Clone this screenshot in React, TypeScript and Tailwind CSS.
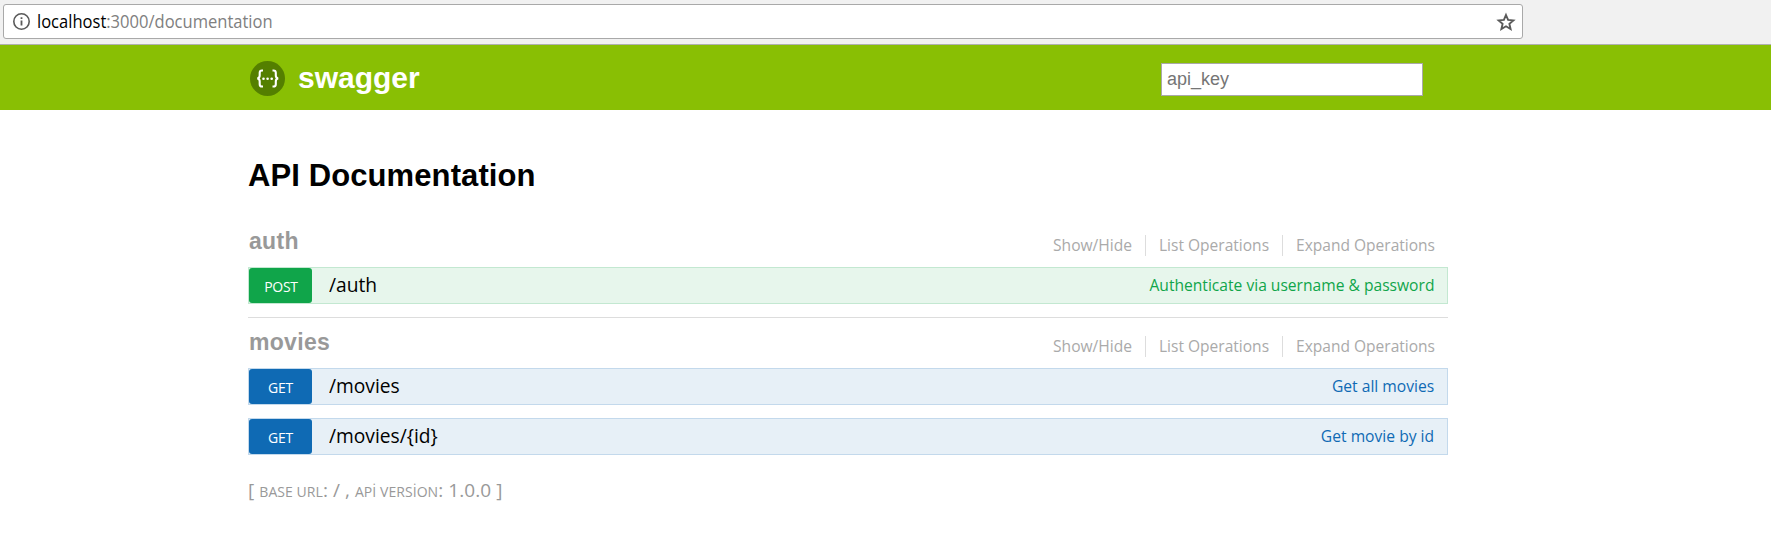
import React from "react";

interface Operation {
  method: "POST" | "GET";
  path: string;
  summary: string;
}

function ResourceHeading({ name }: { name: string }) {
  return (
    <div className="flex h-[37px] items-start justify-between">
      <h2 className="-mt-[3px] pl-px font-['Liberation_Sans',Arial,sans-serif] text-[23px] leading-[28px] font-bold tracking-[0.3px] text-[#999999]">{name}</h2>
      <ul className="mt-[5px] flex pr-[14px] text-[17px] leading-[19px] text-[#aaaaaa]">
        <li className="w-[92px] pb-[2px]">
          <span className="block w-max origin-left scale-x-[0.918]">Show/Hide</span>
        </li>
        <li className="w-[137px] border-l border-[#dddddd] pb-[2px] pl-[13px]">
          <span className="block w-max origin-left scale-x-[0.914]">List Operations</span>
        </li>
        <li className="w-[152px] border-l border-[#dddddd] pb-[2px] pl-[13px]">
          <span className="block w-max origin-left scale-x-[0.914]">Expand Operations</span>
        </li>
      </ul>
    </div>
  );
}

function OperationRow({ method, path, summary }: Operation) {
  const post = method === "POST";
  return (
    <div
      className={
        post
          ? "flex h-[37px] border border-[#c3e8d1] bg-[#e7f6ec]"
          : "flex h-[37px] border border-[#c3d9ec] bg-[#e7f0f7]"
      }
    >
      <span
        className={
          post
            ? "w-[63px] rounded-[3px] bg-[#10a54a] pt-[2px] pl-px text-center text-[14px] leading-[33px] tracking-[-0.3px] text-white"
            : "w-[63px] rounded-[3px] bg-[#0f6ab4] pt-[2px] text-center text-[14px] leading-[33px] tracking-[-0.3px] text-white"
        }
      >
        {method}
      </span>
      <span className="ml-[17px] origin-left scale-x-[0.96] text-[20px] leading-[34px] text-black">{path}</span>
      <span
        className={
          post
            ? "mr-[13px] ml-auto origin-right scale-x-[0.918] text-[17px] leading-[33px] text-[#10a54a]"
            : "mr-[13px] ml-auto origin-right scale-x-[0.92] text-[17px] leading-[33px] text-[#0f6ab4]"
        }
      >
        {summary}
      </span>
    </div>
  );
}

export default function App() {
  return (
    <div className="min-h-[548px] w-[1771px] overflow-hidden bg-white font-['Open_Sans','Noto_Sans',sans-serif] whitespace-nowrap">
      <div className="h-[45px] border-b border-[#b0b0b0] bg-[#f1f1f1] pt-[4px] pl-[3px]">
        <div className="flex h-[35px] w-[1520px] items-center rounded-[3px] border border-[#a9a9a9] bg-white pr-[6px] pl-[8px]">
          <svg className="size-[19px]" viewBox="0 0 19 19" fill="none">
            <circle cx="9.5" cy="9.5" r="7.7" stroke="#5a5a5a" strokeWidth="1.6" />
            <path d="M9.5 8.5v5M9.5 5.3v1.8" stroke="#5a5a5a" strokeWidth="1.8" />
          </svg>
          <span className="-mt-px ml-[6px] origin-left scale-x-[0.945] text-[17.5px] leading-[24px] text-[#808080]">
            <span className="text-black">localhost</span>:3000/documentation
          </span>
          <svg className="ml-auto size-[20px]" viewBox="0 0 20 20" fill="none">
            <path d="M10 3l2.1 4.9 5.3.5-4 3.5 1.2 5.2-4.6-2.8-4.6 2.8 1.2-5.2-4-3.5 5.3-.5z" stroke="#5a5a5a" strokeWidth="1.9" />
          </svg>
        </div>
      </div>

      <header className="h-[65px] bg-[#89bf04]">
        <div className="ml-[248px] flex h-[67px] w-[1200px] items-center pr-[25px] pl-[2px]">
          <svg className="size-[35px]" viewBox="0 0 35 35" fill="none">
            <circle cx="17.5" cy="17.5" r="17.5" fill="#547f00" />
            <path
              d="M13 9.5h-1c-1.7 0-2.3.8-2.3 2.3v2.8c0 1.8-.8 2.7-2.4 2.9 1.6.2 2.4 1.1 2.4 2.9v2.8c0 1.5.6 2.3 2.3 2.3h1M22.5 9.5h1c1.7 0 2.3.8 2.3 2.3v2.8c0 1.8.8 2.7 2.4 2.9-1.6.2-2.4 1.1-2.4 2.9v2.8c0 1.5-.6 2.3-2.3 2.3h-1"
              stroke="#ffffff"
              strokeWidth="2.1"
            />
            <g fill="#ffffff">
              <circle cx="13.5" cy="17.7" r="1.3" />
              <circle cx="17.6" cy="17.7" r="1.3" />
              <circle cx="21.7" cy="17.7" r="1.3" />
            </g>
          </svg>
          <span className="-mt-px ml-[13px] font-['Liberation_Sans',Arial,sans-serif] text-[30px] leading-[36px] font-bold text-white">swagger</span>
          <input
            placeholder="api_key"
            className="mt-[2px] ml-auto h-[33px] w-[262px] border border-[#a9a9a9] bg-white px-[5px] font-['Liberation_Sans',Arial,sans-serif] text-[18px] text-black placeholder:text-[#757575]"
          />
        </div>
      </header>

      <main className="ml-[248px] w-[1200px] pt-[46px]">
        <h1 className="font-['Liberation_Sans',Arial,sans-serif] text-[31px] leading-[40px] font-bold tracking-[0.1px] text-black">API Documentation</h1>
        <section className="mt-[34px] border-b border-[#dddddd] pb-[13px]">
          <ResourceHeading name="auth" />
          <OperationRow method="POST" path="/auth" summary="Authenticate via username & password" />
        </section>
        <section className="mt-[13px]">
          <ResourceHeading name="movies" />
          <div className="flex flex-col gap-[13px]">
            <OperationRow method="GET" path="/movies" summary="Get all movies" />
            <OperationRow method="GET" path="/movies/{id}" summary="Get movie by id" />
          </div>
        </section>
        <footer className="mt-[21px] text-[19px] leading-[28px] tracking-[0.06px] text-[#999999]">
          [ <span className="text-[14px]">BASE URL</span>: / , <span className="text-[14px]">APİ VERSİON</span>: 1.0.0 ]
        </footer>
      </main>
    </div>
  );
}
